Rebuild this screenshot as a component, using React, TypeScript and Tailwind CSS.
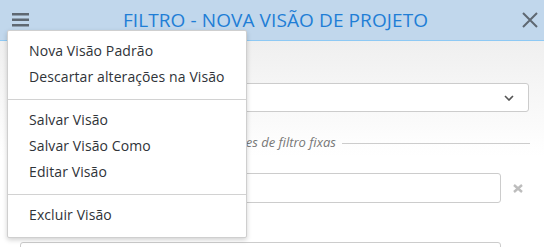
import { ReactNode } from "react";

const MENU_GROUPS = [
  ["Nova Visão Padrão", "Descartar alterações na Visão"],
  ["Salvar Visão", "Salvar Visão Como", "Editar Visão"],
  ["Excluir Visão"],
];

function Header() {
  return (
    <div className="h-[41px] shrink-0 flex items-center bg-[#c1d7ec] border-b border-[#8ec9f4]">
      <svg width="17" height="14" viewBox="0 0 17 14" className="ml-3 shrink-0">
        <rect x="0" y="0" width="17" height="2.5" fill="#5f6872" />
        <rect x="0" y="5.5" width="17" height="2.5" fill="#5f6872" />
        <rect x="0" y="11" width="17" height="2.5" fill="#5f6872" />
      </svg>
      <h1 className="flex-1 text-center text-[19px] leading-none text-[#1f7ed6] tracking-[0.1px]">
        FILTRO - NOVA VISÃO DE PROJETO
      </h1>
      <svg width="16" height="16" viewBox="0 0 16 16" className="mr-[6px] shrink-0">
        <path d="M1 1 L15 15 M15 1 L1 15" stroke="#5f6872" strokeWidth="2" />
      </svg>
    </div>
  );
}

function Box({ children }: { children?: ReactNode }) {
  return (
    <div className="flex-1 h-[30px] flex items-center border border-[#cccccc] rounded-[3px] bg-white">
      {children}
    </div>
  );
}

function ClearIcon() {
  return (
    <div className="w-[28px] shrink-0 flex items-center pl-[12px]">
      <svg width="10" height="9" viewBox="0 0 10 9">
        <path d="M1 1 L9 8 M9 1 L1 8" stroke="#bdbdbd" strokeWidth="2.4" />
      </svg>
    </div>
  );
}

function Menu() {
  return (
    <div className="absolute left-[7px] top-[30px] w-[240px] bg-white border border-[#cfcfcf] rounded-[2px] shadow-[0_2px_5px_rgba(0,0,0,0.18)]">
      {MENU_GROUPS.map((group, gi) => (
        <div key={gi} className={gi > 0 ? "border-t border-[#d2d2d2] py-2" : "py-2"}>
          {group.map(label => (
            <div key={label} className="h-[26px] flex items-center px-[21px] pb-[3px] text-[14px] tracking-[0.1px] text-[#2f3338]">
              {label}
            </div>
          ))}
        </div>
      ))}
    </div>
  );
}

export default function App() {
  return (
    <div className="relative w-[544px] h-[247px] overflow-hidden flex flex-col font-['Open_Sans',sans-serif] bg-white">
      <Header />
      <div className="flex-1 pl-5 pr-[15px] bg-[linear-gradient(to_bottom,#efefef_0px,#ffffff_115px)]">
        <div className="h-[42px]" />
        <div className="h-[29px] flex items-center justify-end border border-[#cccccc] rounded-[3px] bg-white pr-[14px]">
          <svg width="10" height="6" viewBox="0 0 10 6">
            <path d="M1 1 L5 5 L9 1" stroke="#555" strokeWidth="1.6" fill="none" />
          </svg>
        </div>
        <div className="mt-[19px] h-[24px] flex items-center">
          <span className="text-[13px] italic text-[#777777] whitespace-nowrap">
            Projetos que atendem todas as condições de filtro fixas
          </span>
          <div className="flex-1 h-px bg-[#cccccc] ml-[6px] mr-[-1px]" />
        </div>
        <div className="mt-[18px] flex">
          <Box />
          <ClearIcon />
        </div>
        <div className="h-[39px]" />
        <div className="flex">
          <Box />
          <div className="w-[28px] shrink-0" />
        </div>
      </div>
      <Menu />
    </div>
  );
}
